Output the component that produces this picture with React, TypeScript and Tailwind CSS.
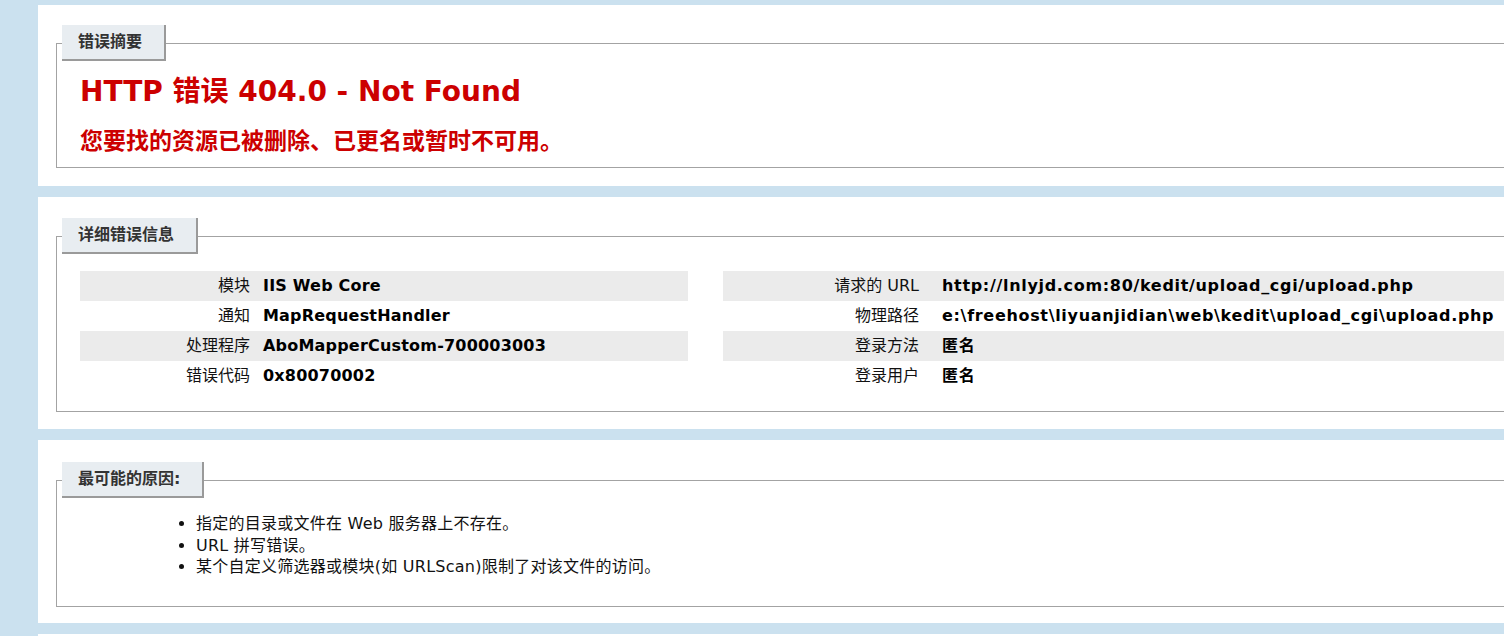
import React from "react";

const font = { fontFamily: '"DejaVu Sans", "Noto Sans CJK SC", sans-serif' };

function Legend({ children }: { children: React.ReactNode }) {
  return (
    <legend className="ml-[-18px] h-[36px] flex items-center pl-[16px] pr-[22px] bg-[#E8EDF1] border-r-2 border-b-2 border-[#9a9a9a] text-[16px] font-bold text-[#333333]">
      {children}
    </legend>
  );
}

const leftRows: [string, string][] = [
  ["模块", "IIS Web Core"],
  ["通知", "MapRequestHandler"],
  ["处理程序", "AboMapperCustom-700003003"],
  ["错误代码", "0x80070002"],
];

const rightRows: [string, string][] = [
  ["请求的 URL", "http://lnlyjd.com:80/kedit/upload_cgi/upload.php"],
  ["物理路径", "e:\\freehost\\liyuanjidian\\web\\kedit\\upload_cgi\\upload.php"],
  ["登录方法", "匿名"],
  ["登录用户", "匿名"],
];

function Table({
  rows,
  labelW,
  width,
  valueCls,
}: {
  rows: [string, string][];
  labelW: string;
  width: string;
  valueCls: string;
}) {
  return (
    <div className={`${width} shrink-0 flex flex-col`}>
      {rows.map(([k, v], i) => (
        <div
          key={k}
          className={`h-[30px] flex items-center ${i % 2 === 0 ? "bg-[#EBEBEB]" : "bg-white"}`}
        >
          <div className={`${labelW} shrink-0 text-right text-[16px] text-[#111] whitespace-nowrap`}>
            {k}
          </div>
          <div className={`text-[16px] font-bold text-black whitespace-nowrap ${valueCls}`}>{v}</div>
        </div>
      ))}
    </div>
  );
}

export default function App() {
  return (
    <div
      className="w-[1504px] h-[636px] overflow-hidden bg-[#CBE1EF] pl-[38px] pt-[5px] flex flex-col gap-[11px]"
      style={font}
    >
      {/* Summary */}
      <div className="w-[1520px] shrink-0 bg-white pt-[20px] pb-[18px] pl-[18px]">
        <fieldset className="border border-r-0 border-[#a3a3a3] pl-[23px] pb-[11px]">
          <Legend>错误摘要</Legend>
          <h2 className="mt-[13px] h-[36px] leading-[36px] text-[28px] font-bold text-[#CC0000] whitespace-nowrap">
            HTTP 错误 404.0 - Not Found
          </h2>
          <h3 className="mt-[16px] h-[30px] leading-[30px] text-[23px] font-bold text-[#CC0000] whitespace-nowrap">
            您要找的资源已被删除、已更名或暂时不可用。
          </h3>
        </fieldset>
      </div>

      {/* Details */}
      <div className="w-[1520px] shrink-0 bg-white pt-[21px] pb-[17px] pl-[18px]">
        <fieldset className="border border-r-0 border-[#a3a3a3] pl-[23px] pb-[20px]">
          <Legend>详细错误信息</Legend>
          <div className="mt-[17px] flex gap-[35px]">
            <Table rows={leftRows} labelW="w-[183px] pr-[13px]" width="w-[608px]" valueCls="tracking-[0.2px]" />
            <Table rows={rightRows} labelW="w-[219px] pr-[23px]" width="w-[900px]" valueCls="tracking-[0.68px]" />
          </div>
        </fieldset>
      </div>

      {/* Causes */}
      <div className="w-[1520px] shrink-0 bg-white pt-[22px] pb-[16px] pl-[18px]">
        <fieldset className="border border-r-0 border-[#a3a3a3] pl-[23px] pb-[28px]">
          <Legend>最可能的原因:</Legend>
          <ul className="mt-[15px] list-disc pl-[116px] text-[16px] leading-[21.5px] text-[#111] tracking-[0.25px]">
            <li>指定的目录或文件在 Web 服务器上不存在。</li>
            <li>URL 拼写错误。</li>
            <li>某个自定义筛选器或模块(如 URLScan)限制了对该文件的访问。</li>
          </ul>
        </fieldset>
      </div>

      <div className="w-[1520px] shrink-0 h-[40px] bg-white" />
    </div>
  );
}
